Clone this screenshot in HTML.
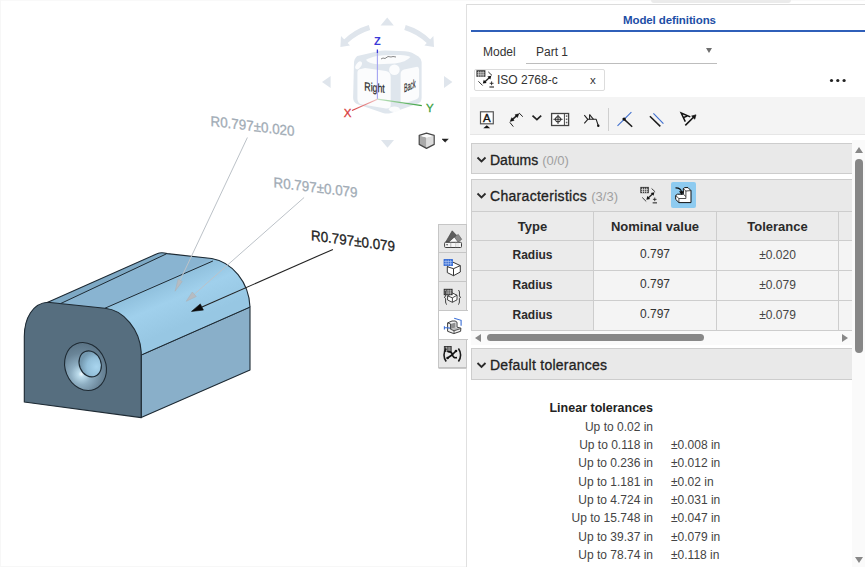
<!DOCTYPE html>
<html><head><meta charset="utf-8">
<style>
*{margin:0;padding:0;box-sizing:border-box}
html,body{width:865px;height:567px;overflow:hidden;background:#fff;font-family:"Liberation Sans",sans-serif;color:#333}
.a{position:absolute}
.t{position:absolute;white-space:nowrap;line-height:1}
</style></head><body>
<!-- viewport -->
<div id="vp" class="a" style="left:0;top:0;width:466px;height:567px;background:#fff"></div>
<svg class="a" style="left:0;top:0" width="466" height="567" viewBox="0 0 466 567">
<defs>
<linearGradient id="gFil" gradientUnits="userSpaceOnUse" x1="150" y1="280" x2="172" y2="330">
<stop offset="0" stop-color="#8abad7"/><stop offset="0.5" stop-color="#a0d0ec"/><stop offset="1" stop-color="#97c7e3"/>
</linearGradient>
<radialGradient id="gCs" gradientUnits="userSpaceOnUse" cx="78.8" cy="372" r="30">
<stop offset="0" stop-color="#f4fbff"/><stop offset="0.1" stop-color="#bcdcec"/><stop offset="0.35" stop-color="#8eaec2"/><stop offset="0.7" stop-color="#6a8598"/><stop offset="1" stop-color="#5c7587"/>
</radialGradient>
<radialGradient id="gIn" gradientUnits="userSpaceOnUse" cx="95" cy="369" r="16">
<stop offset="0" stop-color="#a9d5ee"/><stop offset="0.6" stop-color="#93bfd9"/><stop offset="1" stop-color="#7499b0"/>
</radialGradient>
</defs>
<g stroke="#1e2a33" stroke-width="1.1" stroke-linejoin="round">
<path d="M47.8,302.2 L157,253.8 C160,252.3 163,252.3 167.3,253.6 L211.7,258.5 C232,262 249,282 250,307 L250,370 L141.2,417.6 L24.3,402 L24.3,336.6 C24.3,318 33,303 47.8,302.2 Z" fill="#8cb8d5" stroke="none"/>
<!-- right face -->
<path d="M141.2,355 L250,307 L250,370 L141.2,417.6 Z" fill="#89afc9"/>
<!-- fillet -->
<path d="M104.8,308.3 L212.9,261 L211.7,258.5 C232,262 249,282 250,307 L141.2,355 C140,330 124,310 104.8,308.3 Z" fill="url(#gFil)" stroke="none"/>
<!-- flat top -->
<path d="M60.5,303.6 L167.3,253.6 L211.7,258.5 L104.8,308.3 Z" fill="#89b4d1" stroke="none"/>
<!-- small strip -->
<path d="M47.8,302.2 L157,253.8 C160,252.3 163,252.3 167.3,253.6 L60.5,303.6 Z" fill="#7ea9c5" stroke="none"/>
<!-- edges -->
<path d="M47.8,302.2 L157,253.8 C160,252.3 163,252.3 167.3,253.6 L211.7,258.5 C232,262 249,282 250,307" fill="none"/>
<path d="M61,303.4 L166.5,253.8" fill="none" stroke-width="1"/>
<path d="M104.8,308.3 L212.9,261" fill="none" stroke-width="1"/>
<path d="M141.2,355 L250,307" fill="none" stroke-width="1"/>
<!-- front face -->
<path d="M24.3,402 L24.3,336.6 C24.3,318 33,303 47.8,302.2 L104.8,308.3 C124,310 140,330 141.2,352 L141.2,417.6 Z" fill="#566e7f"/>
<!-- hole -->
<ellipse cx="85.5" cy="366.5" rx="20.3" ry="24.5" transform="rotate(-22 85.5 366.5)" fill="url(#gCs)"/>
<ellipse cx="90.2" cy="363.9" rx="10.8" ry="13.3" transform="rotate(-22 90.2 363.9)" fill="url(#gIn)"/>
</g>
<!-- leaders -->
<g stroke="#bcc2c8" stroke-width="1">
<line x1="247.4" y1="137.5" x2="180.2" y2="280.1"/>
<line x1="304.1" y1="197.5" x2="194.3" y2="294.3"/>
</g>
<path d="M175.1,291.2 L178.2,278.8 L182.2,281.5 Z" fill="#b6bcc2" stroke="#aab1b8" stroke-width="0.6" stroke-linejoin="round"/>
<path d="M186.2,301.3 L192.3,292 L196.3,296.5 Z" fill="#b6bcc2" stroke="#aab1b8" stroke-width="0.6" stroke-linejoin="round"/>
<line x1="332.9" y1="249.4" x2="202" y2="307" stroke="#222" stroke-width="1.1"/>
<path d="M191.5,311.4 L200.3,303.9 L203.4,310.1 Z" fill="#0a0a0a" stroke="#0a0a0a" stroke-width="0.6" stroke-linejoin="round"/>
<text x="0" y="0" font-family="Liberation Sans" font-size="14.5" fill="#a2acb6" stroke="#a2acb6" stroke-width="0.3" transform="translate(210.5 125.9) skewY(7)" textLength="84" lengthAdjust="spacingAndGlyphs">R0.797±0.020</text>
<text x="0" y="0" font-family="Liberation Sans" font-size="14.5" fill="#a2acb6" stroke="#a2acb6" stroke-width="0.3" transform="translate(273.5 187.3) skewY(7)" textLength="84" lengthAdjust="spacingAndGlyphs">R0.797±0.079</text>
<text x="0" y="0" font-family="Liberation Sans" font-size="14.5" fill="#222" stroke="#222" stroke-width="0.3" transform="translate(311 240.3) skewY(7.5)" textLength="84" lengthAdjust="spacingAndGlyphs">R0.797±0.079</text>
</svg>


<svg class="a" style="left:310px;top:0" width="156" height="160" viewBox="310 0 156 160">
<g fill="#dfe5ec">
<path d="M380.6,25.5 L387.2,17.6 L393.8,25.5 Z"/>
<path d="M322,82 L330.6,76 L330.6,88 Z"/>
<path d="M452.4,82 L444,76 L444,88 Z"/>
<path d="M381,140 L394,140 L387.5,147.7 Z"/>
</g>
<g fill="none" stroke="#dfe5ec" stroke-width="5">
<path d="M369.5,27.5 A58,58 0 0 0 345,42"/>
<path d="M405,27.5 A58,58 0 0 1 429.4,42"/>
</g>
<g fill="#dfe5ec">
<path d="M340.4,47 L341,36 L350,45.5 Z"/>
<path d="M434,47 L433.4,36 L424.4,45.5 Z"/>
</g>
<!-- cube frame -->
<path d="M357.4,56.1 Q355,57.5 354,62 L353.1,98 Q353.3,102 357,104 L383,113 Q387,114 391,113 L418,103.5 Q421.6,102 421.6,98 L421.6,62 Q421.2,58.5 418.5,56.5 L412,52.8 Q409,51.5 405,51.3 L385,50.6 Q381,50.6 377,51.5 Z" fill="#dfe6ed"/>
<path d="M361,69 Q357.4,69 357.4,73 L357.4,99 Q357.6,103 361,104.3 L386,108.5 Q390.7,109 390.7,105 L390.7,77 Q390.7,72 386,71 L365,68 Z" fill="#fbfcfd"/>
<path d="M404,69.5 Q400.6,70.5 400.6,74 L400.6,101.5 Q400.8,104.5 404,103.5 L416,99.5 Q419.1,98.5 419.1,95 L419.1,69.5 Q419,66 416,67 Z" fill="#fbfcfd"/>
<path d="M366,59.8 Q372,56 384,55.2 L400,55 Q408,55.3 410.5,57 Q406,62 395,63.5 L378,64.2 Q368,63.8 366,59.8 Z" fill="#fbfcfd"/>
<ellipse cx="358.6" cy="65.4" rx="2.5" ry="4.5" transform="rotate(35 358.6 65.4)" fill="#fbfcfd"/>
<circle cx="394.4" cy="69.7" r="5.3" fill="#fbfcfd"/>
<ellipse cx="394.4" cy="109.3" rx="5.5" ry="2.8" fill="#fbfcfd"/>
<text x="0" y="0" font-family="Liberation Sans" font-size="12" fill="#2c2c2c" stroke="#2c2c2c" stroke-width="0.25" transform="translate(364.3 90.6) skewY(6)" textLength="20.5" lengthAdjust="spacingAndGlyphs">Right</text>
<text x="0" y="0" font-family="Liberation Sans" font-size="12" fill="#2e2e2e" stroke="#2e2e2e" stroke-width="0.25" transform="translate(404 92.6) skewY(-25)" textLength="11.5" lengthAdjust="spacingAndGlyphs">Back</text>
<path d="M381,59 L383,58 L385,58.5 L388,56.5 L391,57 L393,56.5 L396,57" fill="none" stroke="#555" stroke-width="0.7"/>
<!-- axes -->
<line x1="377.4" y1="52" x2="377.4" y2="99.2" stroke="#a4a4f2" stroke-width="1.1"/>
<line x1="377.4" y1="49.5" x2="377.4" y2="53" stroke="#3a3ad8" stroke-width="1.3"/>
<defs><linearGradient id="gX" gradientUnits="userSpaceOnUse" x1="377.4" y1="99.2" x2="352" y2="110.5"><stop offset="0" stop-color="#f2c4c4"/><stop offset="1" stop-color="#d63c3c"/></linearGradient><linearGradient id="gY" gradientUnits="userSpaceOnUse" x1="377.4" y1="99.2" x2="421.8" y2="105.6"><stop offset="0" stop-color="#c5e6c5"/><stop offset="1" stop-color="#3aa040"/></linearGradient></defs>
<line x1="377.4" y1="99.2" x2="352" y2="110.5" stroke="url(#gX)" stroke-width="1.2"/>
<line x1="377.4" y1="99.2" x2="421.8" y2="105.6" stroke="url(#gY)" stroke-width="1.2"/>
<text x="374" y="44.6" font-family="Liberation Sans" font-size="11" font-weight="bold" fill="#3a3ad8">Z</text>
<text x="343.7" y="117" font-family="Liberation Sans" font-size="11.5" fill="#d83b3b" stroke="#d83b3b" stroke-width="0.3">X</text>
<text x="426" y="111.5" font-family="Liberation Sans" font-size="11.5" fill="#3aa040" stroke="#3aa040" stroke-width="0.3">Y</text>
<!-- small cube icon -->
<path d="M426.5,137.6 L419.2,135.4 L419.2,144.4 L426.5,148.4 Z" fill="#a9a9a9"/>
<path d="M426.5,137.6 L434.2,135.4 L434.2,144.4 L426.5,148.4 Z" fill="#dcdcdc"/>
<path d="M419.2,135.4 L426.5,133.1 L434.2,135.4 L426.5,137.6 Z" fill="#fbfbfb"/>
<path d="M419.2,135.4 L426.5,133.1 L434.2,135.4 L434.2,144.4 L426.5,148.4 L419.2,144.4 Z" fill="none" stroke="#484848" stroke-width="1.2" stroke-linejoin="round"/>
<path d="M442,139 L448.3,139 L445.1,142.2 Z" fill="#222" stroke="#222" stroke-width="0.5"/>
</svg>

<!-- top strip -->
<div class="a" style="left:0;top:0;width:865px;height:1px;background:#f9f9f9"></div>
<div class="a" style="left:0;top:0;width:1px;height:567px;background:#f7f7f7"></div>
<div class="a" style="left:0;top:566px;width:466px;height:1px;background:#f7f7f7"></div>
<div class="a" style="left:651px;top:0;width:140px;height:3px;background:#ebebeb;border-radius:0 0 3px 3px"></div>

<!-- right panel -->
<div id="panel" class="a" style="left:466px;top:4px;width:399px;height:563px;background:#fff;border-left:1px solid #e0e0e0;border-top:1px solid #dcdcdc"></div>
<div class="t" style="left:623px;top:14.5px;font-size:11.5px;font-weight:bold;letter-spacing:-0.1px;color:#1d4ea6">Model definitions</div>
<div class="a" style="left:471px;top:30px;width:394px;height:2px;background:#2f5fb9"></div>

<div class="t" style="left:483px;top:46px;font-size:12px;color:#333">Model</div>
<div class="t" style="left:536px;top:46px;font-size:12px;color:#333">Part 1</div>
<div class="a" style="left:705.5px;top:48px;width:0;height:0;border-left:3.3px solid transparent;border-right:3.3px solid transparent;border-top:5.6px solid #6f6f6f"></div>
<div class="a" style="left:526px;top:63px;width:191px;height:1px;background:#bdbdbd"></div>

<div class="a" style="left:474px;top:69px;width:131px;height:22px;border:1px solid #dcdcdc;border-radius:2px"></div>
<div class="t" style="left:497px;top:74px;font-size:12px;color:#333">ISO 2768-c</div>
<div class="t" style="left:590px;top:74.5px;font-size:11.5px;color:#333">x</div>

<!-- toolbar -->
<div class="a" style="left:470px;top:97px;width:395px;height:38px;background:#f4f4f4;border-bottom:1px solid #e6e6e6"></div>
<div class="a" style="left:608px;top:108px;width:1px;height:23px;background:#cfcfcf"></div>

<!-- datums -->
<div class="a" style="left:471px;top:143px;width:382px;height:31px;background:#e9e9e9;border-top:1px solid #cdcdcd;border-bottom:1px solid #cdcdcd;border-left:1px solid #cdcdcd"></div>
<div class="t" style="left:490px;top:153px;font-size:14px;color:#222;-webkit-text-stroke:0.3px #222">Datums <span style="color:#a0a0a0;-webkit-text-stroke:0;font-size:13px">(0/0)</span></div>

<!-- characteristics -->
<div class="a" style="left:471px;top:179px;width:382px;height:33px;background:#e9e9e9;border-top:1px solid #cdcdcd;border-left:1px solid #cdcdcd"></div>
<div class="t" style="left:490px;top:189px;font-size:14px;letter-spacing:0.3px;color:#222;-webkit-text-stroke:0.3px #222">Characteristics <span style="color:#a0a0a0;-webkit-text-stroke:0;letter-spacing:0;font-size:13px">(3/3)</span></div>
<div class="a" style="left:671px;top:182px;width:25px;height:26px;background:#8ecbf0;border-radius:2px"></div>

<!-- table -->
<div class="a" style="left:471px;top:211px;width:382px;height:120px;border-left:1px solid #cdcdcd;border-top:1px solid #cdcdcd;border-bottom:1px solid #cdcdcd;background:#f4f4f4"></div>

<!-- table cells -->
<div class="a" style="left:472px;top:212px;width:122px;height:118px;background:#ebebeb"></div>
<div class="a" style="left:594px;top:212px;width:259px;height:29px;background:#ebebeb"></div>
<div class="a" style="left:472px;top:240px;width:381px;height:1px;background:#cdcdcd"></div>
<div class="a" style="left:472px;top:270px;width:381px;height:1px;background:#cdcdcd"></div>
<div class="a" style="left:472px;top:300px;width:381px;height:1px;background:#cdcdcd"></div>
<div class="a" style="left:593px;top:212px;width:1px;height:118px;background:#cdcdcd"></div>
<div class="a" style="left:716px;top:212px;width:1px;height:118px;background:#cdcdcd"></div>
<div class="a" style="left:838px;top:212px;width:1px;height:118px;background:#cdcdcd"></div>
<div class="t" style="left:472px;width:121px;text-align:center;top:219.5px;font-size:13px;font-weight:bold;color:#2a2a2a">Type</div>
<div class="t" style="left:594px;width:122px;text-align:center;top:219.5px;font-size:13px;font-weight:bold;color:#2a2a2a">Nominal value</div>
<div class="t" style="left:717px;width:121px;text-align:center;top:219.5px;font-size:13px;font-weight:bold;color:#2a2a2a">Tolerance</div>
<div class="t" style="left:472px;width:121px;text-align:center;top:249px;font-size:12px;font-weight:bold;color:#2a2a2a">Radius</div>
<div class="t" style="left:472px;width:121px;text-align:center;top:279px;font-size:12px;font-weight:bold;color:#2a2a2a">Radius</div>
<div class="t" style="left:472px;width:121px;text-align:center;top:309px;font-size:12px;font-weight:bold;color:#2a2a2a">Radius</div>
<div class="t" style="left:594px;width:122px;text-align:center;top:248px;font-size:12px;color:#333">0.797</div>
<div class="t" style="left:594px;width:122px;text-align:center;top:278px;font-size:12px;color:#333">0.797</div>
<div class="t" style="left:594px;width:122px;text-align:center;top:308px;font-size:12px;color:#333">0.797</div>
<div class="t" style="left:717px;width:121px;text-align:center;top:249px;font-size:12px;color:#444">±0.020</div>
<div class="t" style="left:717px;width:121px;text-align:center;top:279px;font-size:12px;color:#444">±0.079</div>
<div class="t" style="left:717px;width:121px;text-align:center;top:309px;font-size:12px;color:#444">±0.079</div>
<!-- h scrollbar -->
<div class="a" style="left:471px;top:331px;width:381px;height:14px;background:#fafafa"></div>
<div class="a" style="left:475px;top:333.5px;width:0;height:0;border-top:4px solid transparent;border-bottom:4px solid transparent;border-right:6px solid #888"></div>
<div class="a" style="left:842px;top:333.5px;width:0;height:0;border-top:4px solid transparent;border-bottom:4px solid transparent;border-left:6px solid #888"></div>
<div class="a" style="left:487px;top:334px;width:217px;height:7px;background:#888;border-radius:4px"></div>

<!-- default tolerances -->
<div class="a" style="left:471px;top:348px;width:382px;height:32px;background:#e9e9e9;border-top:1px solid #cdcdcd;border-bottom:1px solid #cdcdcd;border-left:1px solid #cdcdcd"></div>
<div class="t" style="left:490px;top:358px;font-size:14px;letter-spacing:0.25px;color:#222;-webkit-text-stroke:0.3px #222">Default tolerances</div>

<!-- linear tolerances -->
<div class="t" style="left:500px;width:153px;text-align:right;top:401.5px;font-size:12.5px;font-weight:bold;color:#222">Linear tolerances</div>
<div class="t" style="left:500px;width:153px;text-align:right;top:420.7px;font-size:12px;color:#444">Up to 0.02 in</div>
<div class="t" style="left:500px;width:153px;text-align:right;top:439.0px;font-size:12px;color:#444">Up to 0.118 in</div>
<div class="t" style="left:671px;top:439.0px;font-size:12px;color:#444">±0.008 in</div>
<div class="t" style="left:500px;width:153px;text-align:right;top:457.3px;font-size:12px;color:#444">Up to 0.236 in</div>
<div class="t" style="left:671px;top:457.3px;font-size:12px;color:#444">±0.012 in</div>
<div class="t" style="left:500px;width:153px;text-align:right;top:475.6px;font-size:12px;color:#444">Up to 1.181 in</div>
<div class="t" style="left:671px;top:475.6px;font-size:12px;color:#444">±0.02 in</div>
<div class="t" style="left:500px;width:153px;text-align:right;top:493.9px;font-size:12px;color:#444">Up to 4.724 in</div>
<div class="t" style="left:671px;top:493.9px;font-size:12px;color:#444">±0.031 in</div>
<div class="t" style="left:500px;width:153px;text-align:right;top:512.2px;font-size:12px;color:#444">Up to 15.748 in</div>
<div class="t" style="left:671px;top:512.2px;font-size:12px;color:#444">±0.047 in</div>
<div class="t" style="left:500px;width:153px;text-align:right;top:530.5px;font-size:12px;color:#444">Up to 39.37 in</div>
<div class="t" style="left:671px;top:530.5px;font-size:12px;color:#444">±0.079 in</div>
<div class="t" style="left:500px;width:153px;text-align:right;top:548.8px;font-size:12px;color:#444">Up to 78.74 in</div>
<div class="t" style="left:671px;top:548.8px;font-size:12px;color:#444">±0.118 in</div>

<svg class="a" style="left:466px;top:60px" width="399" height="320" viewBox="466 60 399 320">
<defs>
<g id="tolic">
<rect x="0" y="0" width="9" height="6.6" fill="#3a3a3a"/>
<g stroke="#f4f4f4" stroke-width="0.7">
<line x1="2.3" y1="0.9" x2="2.3" y2="6.6"/><line x1="4.5" y1="0.9" x2="4.5" y2="6.6"/><line x1="6.7" y1="0.9" x2="6.7" y2="6.6"/>
<line x1="0.8" y1="2.6" x2="8.2" y2="2.6"/><line x1="0.8" y1="4.6" x2="8.2" y2="4.6"/>
</g>
<g stroke="#222" fill="none">
<line x1="8" y1="12" x2="13.4" y2="7" stroke-width="1.3"/>
<line x1="11.9" y1="1.7" x2="15.6" y2="5.2" stroke-width="0.9"/>
<line x1="2" y1="11.1" x2="6.2" y2="15.3" stroke-width="0.9"/>
<line x1="15.2" y1="11.2" x2="15.2" y2="15" stroke-width="0.9"/>
<line x1="13.3" y1="13.1" x2="17.1" y2="13.1" stroke-width="0.9"/>
<line x1="13" y1="16.8" x2="17.6" y2="16.8" stroke-width="1.1"/>
</g>
<path d="M14.9,5.6 L13.9,9.4 L11,6.3 Z M6.4,13.4 L10.3,12.7 L7.4,9.6 Z" fill="#111"/>
</g>
</defs>
<!-- chip icon -->
<use href="#tolic" x="476.4" y="70.2"/>
<!-- ellipsis -->
<circle cx="831.5" cy="80.5" r="1.6" fill="#222"/><circle cx="837.8" cy="80.5" r="1.6" fill="#222"/><circle cx="844.1" cy="80.5" r="1.6" fill="#222"/>
<!-- toolbar icon 1: A box -->
<rect x="480.5" y="111.8" width="12.8" height="12" fill="#fff" stroke="#555" stroke-width="1.2"/>
<text x="486.8" y="121.8" font-family="Liberation Sans" font-size="11.5" fill="#111" stroke="#111" stroke-width="0.35" text-anchor="middle">A</text>
<path d="M483.3,128.2 L486.8,125.3 L490.2,128.2 Z" fill="#111"/>
<!-- icon 2: dimension -->
<g stroke="#222" fill="none">
<line x1="512" y1="119.8" x2="517" y2="115.4" stroke-width="1.6"/>
<line x1="519.1" y1="113" x2="522.8" y2="116.7" stroke-width="1"/>
<line x1="509.8" y1="122.3" x2="513.3" y2="126.6" stroke-width="1"/>
</g>
<path d="M510.2,121.4 L514.09,120.39 L511.73,117.67 Z M518.9,113.8 L517.37,117.53 L515.01,114.81 Z" fill="#111" stroke="#111" stroke-width="0.5" stroke-linejoin="round"/>
<path d="M532.5,115.6 L536.9,119.6 L541.2,115.6" fill="none" stroke="#222" stroke-width="1.7"/>
<!-- icon 3: FCF -->
<rect x="551.6" y="113.5" width="17" height="12" fill="#fff" stroke="#444" stroke-width="1.3"/>
<line x1="564.4" y1="113.5" x2="564.4" y2="125.5" stroke="#444" stroke-width="1"/>
<path d="M558,115 L562,119.3 L558,123.6 L554,119.3 Z" fill="none" stroke="#999" stroke-width="0.5"/>
<circle cx="558" cy="119.3" r="2.6" fill="#fff" stroke="#222" stroke-width="1"/>
<line x1="553.5" y1="119.3" x2="562.5" y2="119.3" stroke="#222" stroke-width="0.9"/>
<line x1="558" y1="114.8" x2="558" y2="123.8" stroke="#222" stroke-width="0.9"/>
<rect x="565.8" y="115.3" width="1.6" height="1.6" fill="#666"/><rect x="565.8" y="118.5" width="1.6" height="1.6" fill="#666"/><rect x="565.8" y="121.7" width="1.6" height="1.6" fill="#666"/>
<!-- icon 4: datum target-ish -->
<g stroke="#222" stroke-width="1.1" fill="none" stroke-linejoin="round">
<path d="M584.3,115.2 L587.8,119.3 L584.3,123.4"/>
<path d="M587.8,119.3 L596.2,119.3 L598.2,125.5"/>
<path d="M589.6,114.6 L593.5,119.3"/>
<path d="M589.6,114.6 L589.6,119.3"/>
</g>
<circle cx="598.3" cy="125.8" r="1.2" fill="#111"/>
<!-- separator -->
<!-- icon 5 perpendicular -->
<line x1="617.5" y1="125.8" x2="631.4" y2="112.2" stroke="#3f6fcf" stroke-width="1.1"/>
<line x1="624" y1="119.1" x2="632.2" y2="126.7" stroke="#1a1a1a" stroke-width="1.5"/>
<circle cx="624.1" cy="119.1" r="1.7" fill="#111"/>
<!-- icon 6 parallel -->
<line x1="649.9" y1="116.3" x2="660.3" y2="126.4" stroke="#1a1a1a" stroke-width="1.5"/>
<line x1="653.4" y1="113.3" x2="663.4" y2="123.7" stroke="#3f6fcf" stroke-width="1.1"/>
<!-- icon 7 A arrow -->
<g stroke="#111" stroke-width="1.5" fill="none" stroke-linecap="butt" stroke-linejoin="miter">
<path d="M690.3,116.9 L681.2,113 L685.3,121.6"/>
<path d="M683.4,117.6 L687.2,116"/>
<line x1="685.3" y1="125.4" x2="693.5" y2="117.3"/>
</g>
<path d="M696,114.8 L691.6,116 L694.8,119.2 Z" fill="#111" stroke="#111" stroke-width="0.6"/>
<!-- chevrons -->
<g fill="none" stroke="#2a2a2a" stroke-width="1.8">
<path d="M477.5,157.5 L481.5,161.5 L485.5,157.5"/>
<path d="M477.5,193.5 L481.5,197.5 L485.5,193.5"/>
<path d="M477.5,363 L481.5,367 L485.5,363"/>
</g>
<!-- characteristics icons -->
<use href="#tolic" x="640.3" y="186.9" transform="translate(640.3 186.9) scale(0.95) translate(-640.3 -186.9)"/>
<path d="M675.7,195.5 L677.5,194.2 L683.3,194.2 L683.3,188.6 L684.8,187.6 L688,187.6 L691,190.6 L691,202.6 L679,202.6 L675.7,199.4 Z" fill="#fff" stroke="#111" stroke-width="1" stroke-linejoin="round"/>
<path d="M675.7,195.5 L678.9,198.5 L678.9,202.6 M678.9,198.5 L685.9,198.5 L685.9,191 L683.3,188.6 M685.9,191 L691,190.6 M683.3,194.2 L685.9,196.5" fill="none" stroke="#222" stroke-width="0.8"/>
<path d="M675.5,187.8 Q680.8,187.6 681.6,192" fill="none" stroke="#111" stroke-width="1.3"/>
<path d="M679,191.3 L684.2,191.3 L681.6,194.9 Z" fill="#111"/>
</svg>

<!-- scrollbar -->
<div class="a" style="left:852px;top:140px;width:13px;height:427px;background:#fafafa"></div>
<div class="a" style="left:855px;top:159px;width:8px;height:194px;background:#878787;border-radius:4px"></div>
<div class="a" style="left:855px;top:147px;width:0;height:0;border-left:4px solid transparent;border-right:4px solid transparent;border-bottom:6px solid #888"></div>
<div class="a" style="left:855px;top:557px;width:0;height:0;border-left:4px solid transparent;border-right:4px solid transparent;border-top:6px solid #888"></div>

<!-- side toolbar -->
<svg class="a" style="left:436px;top:220px" width="32" height="152" viewBox="436 220 32 152">
<defs>
<pattern id="grid" width="2.2" height="2.2" patternUnits="userSpaceOnUse"><rect width="2.2" height="2.2" fill="#fff"/><rect width="1.6" height="1.6" fill="#444"/></pattern>
</defs>
<rect x="438.5" y="224.5" width="28" height="143" fill="#e8e8e8" stroke="#c6c6c6"/>
<line x1="438.5" y1="252.5" x2="466.5" y2="252.5" stroke="#c6c6c6"/>
<line x1="438.5" y1="281.5" x2="466.5" y2="281.5" stroke="#c6c6c6"/>
<rect x="438.5" y="310.5" width="29" height="29" fill="#fff" stroke="#c6c6c6"/>
<rect x="466" y="311" width="2" height="28" fill="#fff"/>
<line x1="438.5" y1="368.2" x2="466.5" y2="368.2" stroke="#bdbdbd" stroke-width="1.2"/>
<!-- icon1 fan -->
<path d="M449.5,242 L454.5,236.8 L458,242 Z" fill="#fafafa"/>
<path d="M454.3,236.9 L458.3,234.4 L461.7,239.3 L458.2,242.2 Z" fill="#8a8a8a" stroke="#555" stroke-width="0.6" stroke-linejoin="round"/>
<path d="M452.2,230.8 L456.4,235.2 L448.6,242.2 L445.6,242.2 Z" fill="#5e5e5e" stroke="#3a3a3a" stroke-width="0.6" stroke-linejoin="round"/>
<rect x="444.6" y="242.3" width="16.9" height="5.2" rx="1" fill="#f6f6f6" stroke="#3e3e3e" stroke-width="1"/>
<line x1="450.8" y1="242.5" x2="450.8" y2="247.3" stroke="#9a9a9a" stroke-width="0.7"/>
<line x1="455.8" y1="242.5" x2="455.8" y2="247.3" stroke="#b5b5b5" stroke-width="0.7"/>
<line x1="458" y1="242.5" x2="458" y2="247.3" stroke="#cfcfcf" stroke-width="0.6"/>
<path d="M446.2,244 L447.9,244 L447.1,246 Z" fill="#444"/>
<!-- icon2 blue grid + cube -->
<g stroke="#2a2a2a" stroke-width="0.95" stroke-linejoin="round" fill="#fff">
<path d="M447.3,266.7 L453,262.2 L460.3,265.6 L460.3,272 L453.5,275.7 L447.3,272.6 Z"/>
<path d="M447.3,266.7 L453.5,268.7 L460.3,265.6 M453.5,268.7 L453.5,275.7" fill="none"/>
</g>
<rect x="443.6" y="259.1" width="9.4" height="7" fill="#3b6fd6" rx="0.5"/>
<g stroke="#b9cff5" stroke-width="0.6">
<line x1="446" y1="259.8" x2="446" y2="265.5"/><line x1="448.3" y1="259.8" x2="448.3" y2="265.5"/><line x1="450.6" y1="259.8" x2="450.6" y2="265.5"/>
<line x1="444.2" y1="261.5" x2="452.4" y2="261.5"/><line x1="444.2" y1="263.7" x2="452.4" y2="263.7"/>
</g>
<!-- icon3 grid+cube in braces -->
<g stroke="#333" stroke-width="0.9" stroke-linejoin="round" fill="#fff">
<path d="M447.6,295.9 L452.4,293 L457,295.2 L457,299.8 L452.4,302.3 L447.6,300 Z"/>
<path d="M447.6,295.9 L452.4,297.8 L457,295.2 M452.4,297.8 L452.4,302.3" fill="none"/>
</g>
<rect x="443.7" y="288.8" width="8.9" height="6.4" fill="#333"/>
<g stroke="#eee" stroke-width="0.6">
<line x1="445.9" y1="289.6" x2="445.9" y2="294.6"/><line x1="448.1" y1="289.6" x2="448.1" y2="294.6"/><line x1="450.3" y1="289.6" x2="450.3" y2="294.6"/>
<line x1="444.4" y1="290.9" x2="451.9" y2="290.9"/><line x1="444.4" y1="293" x2="451.9" y2="293"/>
</g>
<path d="M446.8,290 Q445.3,290.5 445.5,293 L445.6,296 Q445.3,297 444.2,297.3 Q445.3,297.7 445.6,298.7 L445.6,302 Q445.6,304 447,304.6" fill="none" stroke="#444" stroke-width="1"/>
<path d="M458.3,290 Q459.6,290.5 459.5,293 L459.4,296 Q459.6,297 460.7,297.3 Q459.6,297.7 459.4,298.7 L459.4,302 Q459.4,304 458,304.6" fill="none" stroke="#444" stroke-width="1"/>
<!-- icon4 L bracket with blue dims -->
<path d="M447.6,322.9 L452,321 L455.1,321 L457,322.2 L457,327.2 L460.9,328.1 L460.6,331.3 L453.8,333.6 L447.6,331.3 Z" fill="#f2f2f2" stroke="#2a2a2a" stroke-width="0.9" stroke-linejoin="round"/>
<path d="M450.5,323.9 L455.5,322.6 L455.5,327.6 L450.5,329.2 Z" fill="#8f8f8f"/>
<path d="M450.5,329.2 L455.5,327.6 L460.6,328.6 L454,330.8 Z" fill="#bdbdbd"/>
<path d="M447.6,322.9 L450.5,323.9 L450.5,329.2 L454,330.8 L454,333.4 M454,330.8 L460.6,328.6" fill="none" stroke="#333" stroke-width="0.8"/>
<path d="M454.2,318.3 L461.1,320.3 L461.1,325.8" fill="none" stroke="#3b6fd6" stroke-width="1.1"/>
<path d="M444.4,326.3 L444.4,329.5 M444.4,327.5 L450.1,328.1" fill="none" stroke="#3b6fd6" stroke-width="1.1"/>
<!-- icon5 grid (x) -->
<rect x="443.9" y="346" width="7.8" height="6" fill="#3a3a3a"/>
<g stroke="#ddd" stroke-width="0.55">
<line x1="446.5" y1="346.8" x2="446.5" y2="352"/><line x1="449.1" y1="346.8" x2="449.1" y2="352"/>
<line x1="444.6" y1="348" x2="451" y2="348"/><line x1="444.6" y1="350" x2="451" y2="350"/>
</g>
<path d="M446.2,348.5 Q444,351.5 444,355 Q444,358.5 446.2,361.5" fill="none" stroke="#1a1a1a" stroke-width="1.6"/>
<path d="M458.4,348.5 Q460.6,351.5 460.6,355 Q460.6,358.5 458.4,361.5" fill="none" stroke="#1a1a1a" stroke-width="1.6"/>
<path d="M447.6,358 Q452,355.5 456,351" fill="none" stroke="#111" stroke-width="1.7" stroke-linecap="round"/>
<circle cx="447.6" cy="358" r="1.3" fill="#111"/><circle cx="456" cy="351" r="1.3" fill="#111"/>
<path d="M447.6,351.6 Q452,351.5 452.6,355 Q453,358.2 457,357.6" fill="none" stroke="#111" stroke-width="1.6"/>
</svg>
</body></html>
